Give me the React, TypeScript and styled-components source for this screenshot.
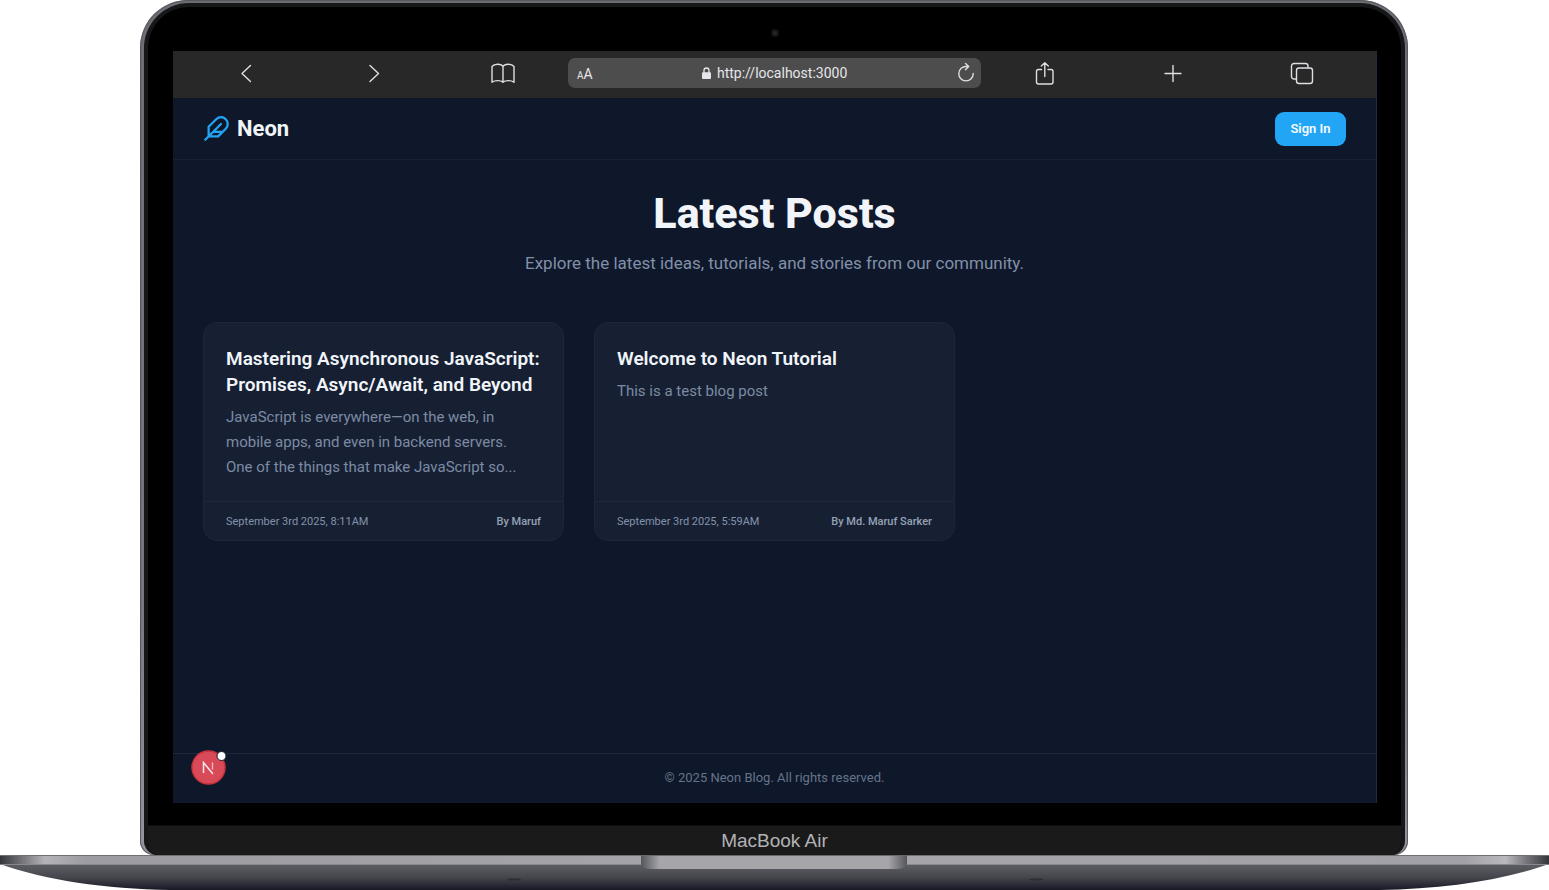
import React from "react";
import styled, { createGlobalStyle } from "styled-components";

const GlobalStyle = createGlobalStyle`
  *, *::before, *::after { box-sizing: border-box; }
  body {
    margin: 0;
    background: #ffffff;
    font-family: Roboto, "Noto Sans", sans-serif;
  }
  h1, h2, p { margin: 0; }
  button, input { font-family: inherit; }
`;

const Laptop = styled.div`
  display: flex;
  flex-direction: column;
  min-height: 100vh;
  overflow: hidden;
`;

const Lid = styled.div`
  display: flex;
  flex: 1;
  flex-direction: column;
  margin: 0 141px 0 140px;
  padding: 3px 3px 0 4px;
  border-radius: 48px 48px 14px 14px;
  background: linear-gradient(#6d6e74, #77787f 70%, #96969e);
  box-shadow: inset 0 0 1px 1px #55565a;
`;

const Bezel = styled.div`
  display: flex;
  flex: 1;
  flex-direction: column;
  border: 4px solid #161718;
  border-bottom-width: 0;
  border-radius: 45px 45px 14px 14px;
  background: #000000;
  overflow: hidden;
`;

const CameraStrip = styled.div`
  display: flex;
  height: 44px;
  align-items: center;
  justify-content: center;
  padding-top: 8px;
`;

const Camera = styled.span`
  width: 8px;
  height: 8px;
  border: 2px solid #141415;
  border-radius: 50%;
  background: #26272b;
`;

const Screen = styled.div`
  display: flex;
  flex: 1;
  flex-direction: column;
  margin: 0 24px 22px 25px;
  border-right: 1px solid #222c3f;
  background: #0f172a;
`;

const Chin = styled.div`
  height: 30px;
  background: #1a1a1a;
  border-top: 1px solid #0e0e0e;
  color: #b2b2b6;
  font: 400 19px/30px "Liberation Sans", sans-serif;
  text-align: center;
`;

const Base = styled.svg`
  display: block;
  width: 100%;
  height: 35px;
`;

const Toolbar = styled.div`
  display: grid;
  grid-template-columns: 1fr minmax(0, 413px) 1fr;
  align-items: center;
  height: 47px;
  padding-bottom: 3px;
  background: #282828;
`;

const ToolGroup = styled.div<{ $end?: boolean }>`
  display: grid;
  grid-template-columns: repeat(3, 1fr);
  justify-items: center;
  padding: ${(p) => (p.$end ? "0 10px 0 0" : "0 1px 0 9px")};
`;

const ToolButton = styled.button`
  display: flex;
  padding: 0;
  border: 0;
  background: none;
  color: #dedee3;
`;

const AddressBar = styled.form`
  display: flex;
  align-items: center;
  height: 30px;
  padding: 0 7px 0 9px;
  border-radius: 7px;
  background: #4d4d4d;
  color: #e6e6ea;
`;

const TextSize = styled.button`
  flex: 1;
  padding: 4px 0 0;
  border: 0;
  background: none;
  color: inherit;
  font-size: 14px;
  line-height: 18px;
  text-align: left;

  small { font-size: 10px; }
`;

const UrlLabel = styled.label`
  display: flex;
  align-items: center;
  gap: 6px;
  padding-bottom: 1px;
`;

const UrlInput = styled.input`
  width: 132px;
  padding: 0;
  border: 0;
  outline: 0;
  background: none;
  color: inherit;
  font-size: 14px;
  line-height: 20px;
`;

const ReloadSlot = styled.div`
  display: flex;
  flex: 1;
  justify-content: flex-end;
`;

const Header = styled.header`
  display: flex;
  align-items: center;
  justify-content: space-between;
  height: 62px;
  padding: 0 30px;
  border-bottom: 1px solid #172033;
`;

const Brand = styled.a`
  display: flex;
  align-items: center;
  gap: 7px;
  color: #f1f5f9;
  font-size: 22px;
  font-weight: 700;
  line-height: 30px;
  text-decoration: none;
`;

const SignIn = styled.button`
  width: 71px;
  height: 34px;
  padding: 0;
  border: 0;
  border-radius: 9px;
  background: #22a5f5;
  color: #f4faff;
  font-size: 13px;
  font-weight: 600;
`;

const Main = styled.main`
  flex: 1;
  padding: 30px;
`;

const Intro = styled.section`
  display: flex;
  flex-direction: column;
  align-items: center;
  gap: 14px;
  margin-bottom: 46px;
  text-align: center;
`;

const PageTitle = styled.h1`
  color: #f1f5f9;
  font-size: 43px;
  font-weight: 800;
  line-height: 46px;
`;

const Lead = styled.p`
  color: #8190a8;
  font-size: 17px;
  line-height: 26px;
`;

const Posts = styled.div`
  display: grid;
  grid-template-columns: repeat(3, minmax(0, 1fr));
  gap: 30px;
`;

const Card = styled.article`
  display: flex;
  flex-direction: column;
  border: 1px solid #1c2639;
  border-radius: 14px;
  background: #172033;
`;

const CardBody = styled.div`
  flex: 1;
  padding: 23px 22px 21px;
`;

const CardTitle = styled.h2`
  margin-bottom: 7px;
  color: #f1f5f9;
  font-size: 19px;
  font-weight: 600;
  line-height: 26px;
`;

const Excerpt = styled.p`
  color: #7c8ba3;
  font-size: 15px;
  line-height: 25px;
`;

const CardMeta = styled.footer`
  display: flex;
  align-items: center;
  justify-content: space-between;
  height: 39px;
  padding: 0 22px;
  border-top: 1px solid #1d283a;
  color: #8492a9;
  font-size: 11px;
`;

const Author = styled.span`
  color: #95a2b7;
  font-weight: 500;
`;

const SiteFooter = styled.footer`
  position: relative;
  display: flex;
  align-items: center;
  justify-content: center;
  height: 50px;
  padding-bottom: 2px;
  border-top: 1px solid #1d283a;
  color: #64748b;
  font-size: 13px;
`;

const DevBadge = styled.button`
  position: absolute;
  top: -4px;
  left: 18px;
  width: 35px;
  height: 35px;
  padding: 0;
  border: 0;
  background: none;

  svg { display: block; overflow: visible; }
`;

const icon = {
  fill: "none",
  stroke: "currentColor",
  strokeWidth: 1.4,
  strokeLinecap: "round" as const,
  strokeLinejoin: "round" as const,
  "aria-hidden": true,
};

type Post = { title: React.ReactNode; excerpt: React.ReactNode; date: string; author: string };

const posts: Post[] = [
  {
    title: <>Mastering Asynchronous JavaScript:<br />Promises, Async/Await, and Beyond</>,
    excerpt: (
      <>
        JavaScript is everywhere—on the web, in<br />
        mobile apps, and even in backend servers.<br />
        One of the things that make JavaScript so...
      </>
    ),
    date: "September 3rd 2025, 8:11AM",
    author: "By Maruf",
  },
  {
    title: "Welcome to Neon Tutorial",
    excerpt: "This is a test blog post",
    date: "September 3rd 2025, 5:59AM",
    author: "By Md. Maruf Sarker",
  },
];

function BrowserToolbar() {
  return (
    <Toolbar>
      <ToolGroup>
        <ToolButton aria-label="Back">
          <svg width="24" height="24" viewBox="0 0 24 24" {...icon}><path d="M16.500 4.500 8 12.500l8.500 8" /></svg>
        </ToolButton>
        <ToolButton aria-label="Forward">
          <svg width="24" height="24" viewBox="0 0 24 24" {...icon}><path d="m8 4.500 8.500 8-8.500 8" /></svg>
        </ToolButton>
        <ToolButton aria-label="Bookmarks">
          <svg width="24" height="24" viewBox="0 0 24 24" {...icon}>
            <path d="M12 5.500C10.500 2.800 3.500 2.200 1 5.500v15.800c2.500-2.200 9-2.200 11 0 2-2.200 8.500-2.200 11 0V5.500C20.500 2.200 13.500 2.800 12 5.500zv15.800" />
          </svg>
        </ToolButton>
      </ToolGroup>
      <AddressBar onSubmit={(e) => e.preventDefault()}>
        <TextSize type="button" aria-label="Text size"><small>A</small>A</TextSize>
        <UrlLabel>
          <svg width="9" height="12" viewBox="0 0 9 12" aria-label="Secure">
            <path d="M2 6V3.500a2.500 2.500 0 0 1 5 0V6" fill="none" stroke="currentColor" strokeWidth="1.300" />
            <rect y="5.200" width="9" height="6.800" rx="1" fill="currentColor" />
          </svg>
          <UrlInput aria-label="Address" defaultValue="http://localhost:3000" />
        </UrlLabel>
        <ReloadSlot>
          <ToolButton type="button" aria-label="Reload">
            <svg width="16" height="20" viewBox="0 0 16 20" {...icon}>
              <path d="M10.500 3.500H8.500A7.200 7.200 0 1 0 15.200 10.500M7.500.5l3.200 3-3.200 3.300" />
            </svg>
          </ToolButton>
        </ReloadSlot>
      </AddressBar>
      <ToolGroup $end>
        <ToolButton aria-label="Share">
          <svg width="24" height="24" viewBox="0 0 24 24" {...icon}>
            <path d="M8.500 8.500h-3a2 2 0 0 0-2 2V21a2 2 0 0 0 2 2h12.500a2 2 0 0 0 2-2V10.500a2 2 0 0 0-2-2h-3M11.800 15.500V2M8.300 5l3.500-3.300L15.300 5" />
          </svg>
        </ToolButton>
        <ToolButton aria-label="New tab">
          <svg width="24" height="24" viewBox="0 0 24 24" {...icon}><path d="M12 4.500v16M4 12.500h16" /></svg>
        </ToolButton>
        <ToolButton aria-label="Tabs">
          <svg width="24" height="24" viewBox="0 0 24 24" {...icon}>
            <rect x="6.500" y="7" width="16" height="15.500" rx="2.500" />
            <path d="M6.500 18H4A2.500 2.500 0 0 1 1.500 15.500V5A2.500 2.500 0 0 1 4 2.500h11.500A2.500 2.500 0 0 1 18 5v2" />
          </svg>
        </ToolButton>
      </ToolGroup>
    </Toolbar>
  );
}

function LaptopBase() {
  return (
    <Base viewBox="0 0 1549 35" preserveAspectRatio="none" aria-hidden="true">
      <defs>
        <linearGradient id="under" x1="0" y1="0" x2="0" y2="1">
          <stop offset="0.1" stopColor="#5a5b61" />
          <stop offset="0.5" stopColor="#46474e" />
          <stop offset="1" stopColor="#171824" />
        </linearGradient>
        <linearGradient id="edge">
          <stop offset="0" stopColor="#34353a" />
          <stop offset="0.015" stopColor="#77777d" />
          <stop offset="0.029" stopColor="#b4b4b8" />
          <stop offset="0.055" stopColor="#9c9ca2" />
          <stop offset="0.5" stopColor="#a5a5aa" />
          <stop offset="0.945" stopColor="#a1a1a7" />
          <stop offset="0.972" stopColor="#b9b9bd" />
          <stop offset="0.985" stopColor="#77777d" />
          <stop offset="1" stopColor="#34353a" />
        </linearGradient>
        <linearGradient id="notch">
          <stop offset="0" stopColor="#55565b" />
          <stop offset="0.07" stopColor="#a5a5aa" />
          <stop offset="0.93" stopColor="#a5a5aa" />
          <stop offset="1" stopColor="#55565b" />
        </linearGradient>
      </defs>
      <path d="M0 9C45 25 105 34 170 35h1209c65-1 125-10 170-26z" fill="url(#under)" />
      <path d="M0 0h1549v9.500H0z" fill="url(#edge)" />
      <path d="M0 .5h1549" stroke="#6f7075" />
      <path d="M2 9.500h1545" stroke="#88888e" />
      <path d="M641 0h266v9q-1 5-12 5H653q-11 0-12-5z" fill="url(#notch)" />
      <path d="M641 .5h266" stroke="#66676c" />
      <ellipse cx="514" cy="24.500" rx="7" ry="1" fill="#2c2d34" />
      <ellipse cx="1036" cy="24.500" rx="7" ry="1" fill="#2c2d34" />
    </Base>
  );
}

export default function App() {
  return (
    <>
      <GlobalStyle />
      <Laptop>
        <Lid>
          <Bezel>
            <CameraStrip><Camera /></CameraStrip>
            <Screen>
              <BrowserToolbar />
              <Header>
                <Brand href="#">
                  <svg width="27" height="27" viewBox="0 0 24 24" {...icon} stroke="#22a5f5" strokeWidth={2}>
                    <path d="M20.240 12.240a6 6 0 0 0-8.490-8.490L5 10.500V19h8.500zM16 8 2 22M17.500 15H9" />
                  </svg>
                  Neon
                </Brand>
                <SignIn>Sign In</SignIn>
              </Header>
              <Main>
                <Intro>
                  <PageTitle>Latest Posts</PageTitle>
                  <Lead>Explore the latest ideas, tutorials, and stories from our community.</Lead>
                </Intro>
                <Posts>
                  {posts.map((post) => (
                    <Card key={post.date}>
                      <CardBody>
                        <CardTitle>{post.title}</CardTitle>
                        <Excerpt>{post.excerpt}</Excerpt>
                      </CardBody>
                      <CardMeta>
                        <time>{post.date}</time>
                        <Author>{post.author}</Author>
                      </CardMeta>
                    </Card>
                  ))}
                </Posts>
              </Main>
              <SiteFooter>
                <DevBadge aria-label="Open developer tools">
                  <svg width="35" height="35" viewBox="0 0 35 35" aria-hidden="true">
                    <circle cx="17.500" cy="17.500" r="16.500" fill="#d94a59" stroke="#c9323c" strokeWidth="1.500" />
                    <path d="M12.500 23V12.500L22 24" fill="none" stroke="#f7e6e9" strokeWidth="1.500" />
                    <path d="M21.500 12.500v7" stroke="#f0b9c0" strokeWidth="1.400" />
                    <circle cx="30.500" cy="6" r="4.500" fill="#ffffff" stroke="#0f172a" />
                  </svg>
                </DevBadge>
                © 2025 Neon Blog. All rights reserved.
              </SiteFooter>
            </Screen>
            <Chin>MacBook Air</Chin>
          </Bezel>
        </Lid>
        <LaptopBase />
      </Laptop>
    </>
  );
}
